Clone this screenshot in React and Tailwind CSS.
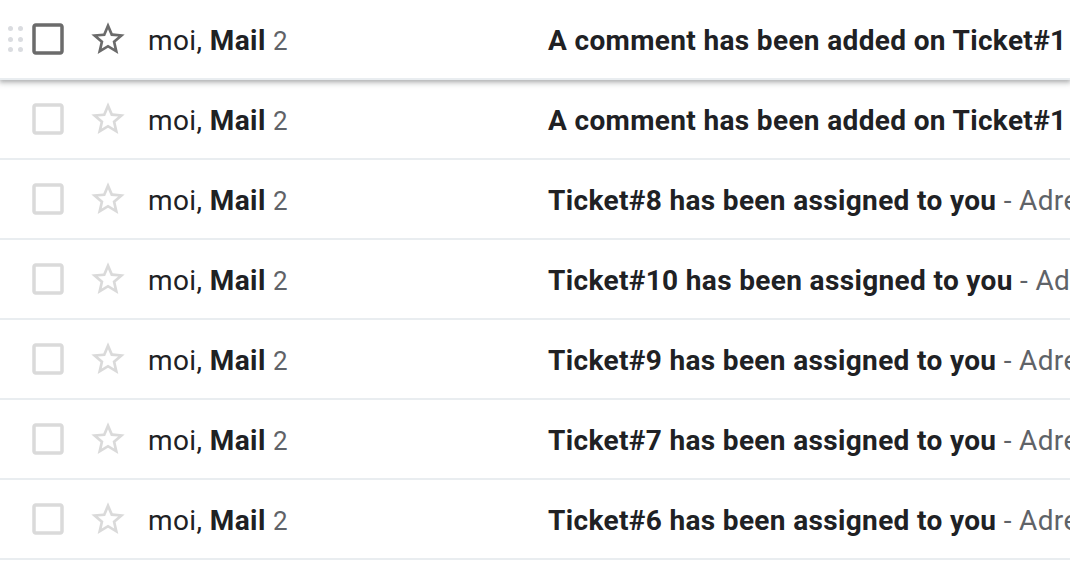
import React from 'react';

const rows = [
  { subject: 'A comment has been added on Ticket#1', snippet: '' },
  { subject: 'A comment has been added on Ticket#1', snippet: '' },
  { subject: 'Ticket#8 has been assigned to you', snippet: 'Adresse email du client' },
  { subject: 'Ticket#10 has been assigned to you', snippet: 'Adresse email du client' },
  { subject: 'Ticket#9 has been assigned to you', snippet: 'Adresse email du client' },
  { subject: 'Ticket#7 has been assigned to you', snippet: 'Adresse email du client' },
  { subject: 'Ticket#6 has been assigned to you', snippet: 'Adresse email du client' },
];

const DragHandle = ({ visible }) => (
  <div className={`w-[27px] shrink-0 h-full flex items-center pl-[8px] ${visible ? '' : 'invisible'}`}>
    <div className="grid grid-cols-2 gap-x-[5px] gap-y-[5.5px]">
      {[0, 1, 2, 3, 4, 5].map((i) => (
        <span key={i} className="block w-[5px] h-[5px] rounded-full bg-[#dadce0]" />
      ))}
    </div>
  </div>
);

const Checkbox = ({ color }) => (
  <svg width="42" height="42" viewBox="0 0 24 24" className="shrink-0" fill={color}>
    <path d="M19 5v14H5V5h14m0-2H5c-1.1 0-2 .9-2 2v14c0 1.1.9 2 2 2h14c1.1 0 2-.9 2-2V5c0-1.1-.9-2-2-2z" />
  </svg>
);

const Star = ({ color }) => (
  <svg width="40" height="40" viewBox="0 0 24 24" className="shrink-0 ml-[19px]" fill={color}>
    <path d="M22 9.24l-7.19-.62L12 2 9.19 8.63 2 9.24l5.46 4.73L5.82 21 12 17.27 18.18 21l-1.63-7.03L22 9.24zM12 15.4l-3.76 2.27 1-4.28-3.32-2.88 4.38-.38L12 6.1l1.71 4.04 4.38.38-3.32 2.88 1 4.28L12 15.4z" />
  </svg>
);

const MailRow = ({ row, hovered }) => (
  <div
    className={`relative flex items-center h-[80px] border-b-2 border-[#e9edf0] bg-white whitespace-nowrap ${
      hovered ? 'z-10 shadow-[0_2px_4px_0_rgba(60,64,67,0.3),0_2px_6px_2px_rgba(60,64,67,0.15)]' : ''
    }`}
  >
    <DragHandle visible={hovered} />
    <Checkbox color={hovered ? '#6b6b6b' : '#dadada'} />
    <Star color={hovered ? '#6b6b6b' : '#dadada'} />
    <div className="ml-[20px] mt-[4px] w-[400px] shrink-0 text-[28px] tracking-[0.4px] text-[#202124]">
      moi, <span className="font-bold">Mail</span>{' '}
      <span className="text-[26px] text-[#5f6368]">2</span>
    </div>
    <div className="mt-[4px] text-[28px] tracking-[0.35px] text-[#202124]">
      <span className="font-bold">{row.subject}</span>
      {row.snippet && <span className="text-[#5f6368]"> - {row.snippet}</span>}
    </div>
  </div>
);

export default function App() {
  return (
    <div className="w-[1070px] h-[564px] overflow-hidden bg-white" style={{ fontFamily: 'Roboto, "Liberation Sans", sans-serif' }}>
      {rows.map((row, i) => (
        <MailRow key={i} row={row} hovered={i === 0} />
      ))}
    </div>
  );
}
